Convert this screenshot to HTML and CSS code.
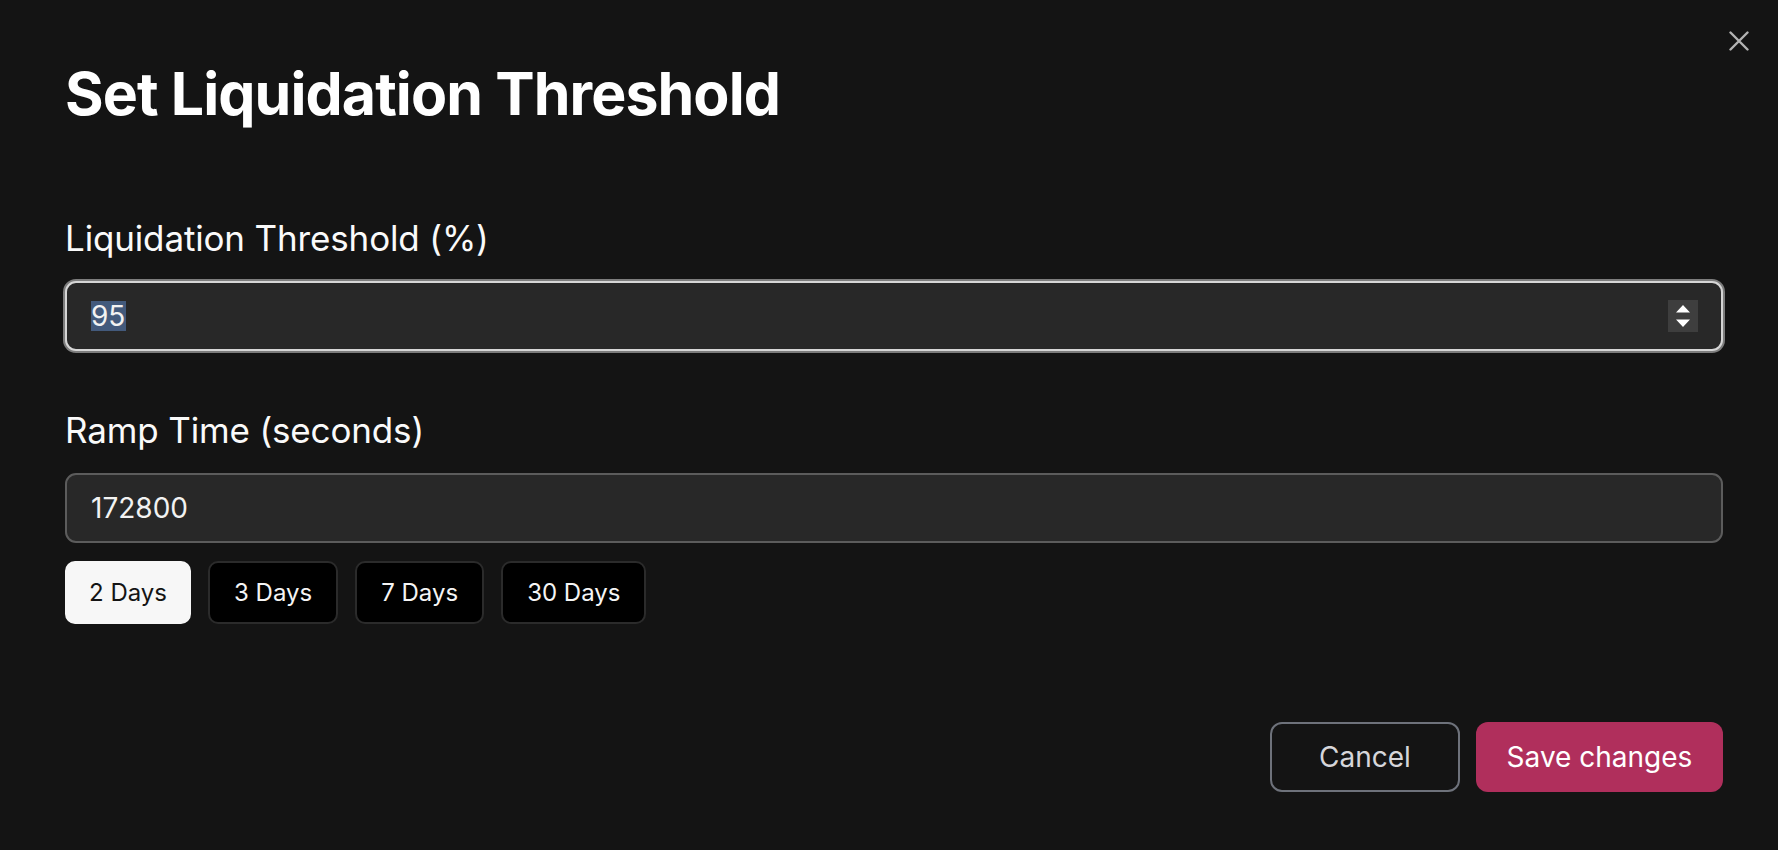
FILE: index.html
```html
<!DOCTYPE html>
<html lang="en">
<head>
<meta charset="utf-8">
<title>Set Liquidation Threshold</title>
<link rel="stylesheet" href="styles.css">
</head>
<body>
<div class="dialog">
  <button class="close" aria-label="Close">
    <svg width="20" height="20" viewBox="0 0 20 20"><path d="M1.5 1.5 L18.5 18.5 M18.5 1.5 L1.5 18.5" stroke="#b3b3b3" stroke-width="2.4" stroke-linecap="round" fill="none"/></svg>
  </button>
  <h1 class="title">Set Liquidation Threshold</h1>

  <div class="field field-first">
    <label class="label">Liquidation Threshold (%)</label>
    <div class="input input-focus">
      <span class="value"><span class="selected">95</span></span>
      <span class="spinner">
        <svg width="30" height="32" viewBox="0 0 30 32"><path d="M8 12.5 L15 5 L22 12.5 Z M8 19.5 L22 19.5 L15 27 Z" fill="#ffffff"/></svg>
      </span>
    </div>
  </div>

  <div class="field field-second">
    <label class="label">Ramp Time (seconds)</label>
    <div class="input">
      <span class="value">172800</span>
    </div>
  </div>

  <div class="presets">
    <button class="preset preset-active">2 Days</button>
    <button class="preset">3 Days</button>
    <button class="preset">7 Days</button>
    <button class="preset">30 Days</button>
  </div>

  <div class="footer">
    <button class="btn btn-cancel">Cancel</button>
    <button class="btn btn-save">Save changes</button>
  </div>
</div>
</body>
</html>
```
FILE: styles.css
```css
* { box-sizing: border-box; }
html, body {
  margin: 0;
  height: 100%;
  background: #141414;
}
body {
  font-family: Inter, "Noto Sans", "Liberation Sans", sans-serif;
  color: #fafafa;
}
.dialog {
  position: relative;
  height: 850px;
  padding: 58px 55px 0 65px;
  display: flex;
  flex-direction: column;
}
.close {
  position: absolute;
  top: 31px;
  right: 29px;
  width: 20px;
  height: 20px;
  padding: 0;
  border: 0;
  background: transparent;
  display: flex;
}
.title {
  margin: 0;
  font-size: 59px;
  line-height: 72px;
  font-weight: 700;
  color: #ffffff;
  letter-spacing: -0.9px;
}
.field {
  display: flex;
  flex-direction: column;
  gap: 22px;
}
.field-first { margin-top: 87px; }
.field-second { margin-top: 58px; }
.label {
  font-size: 35px;
  line-height: 42px;
  font-weight: 400;
  color: #fafafa;
  letter-spacing: -0.15px;
}
.input {
  height: 70px;
  border: 2px solid #5c5c5c;
  border-radius: 11px;
  background: #282828;
  display: flex;
  align-items: center;
  justify-content: space-between;
  padding: 0 23px 0 24px;
  font-size: 28px;
  color: #f2f2f2;
}
.input-focus {
  border-color: #d6d6d6;
  box-shadow: 0 0 0 2px #7d7d7d;
}
.value {
  line-height: 30px;
}
.selected {
  display: inline-block;
  background: #435a7c;
  line-height: 30px;
  padding: 0 1px 0 0;
}
.spinner {
  width: 30px;
  height: 32px;
  background: #3e3e3e;
  display: flex;
}
.presets {
  margin-top: 18px;
  display: flex;
  gap: 17px;
}
.preset {
  height: 63px;
  padding: 0 24px;
  border: 2px solid #2b2b2b;
  border-radius: 10px;
  background: #000000;
  color: #f5f5f5;
  font-family: Inter, "Noto Sans", "Liberation Sans", sans-serif;
  font-size: 24px;
  font-weight: 400;
}
.preset-active {
  padding: 0 22px;
  background: #f7f7f7;
  border-color: #f7f7f7;
  color: #141414;
}
.footer {
  margin-top: 98px;
  display: flex;
  justify-content: flex-end;
  gap: 16px;
}
.btn {
  height: 70px;
  border-radius: 12px;
  font-family: Inter, "Noto Sans", "Liberation Sans", sans-serif;
  font-size: 28px;
  font-weight: 400;
}
.btn-cancel {
  width: 190px;
  background: transparent;
  border: 2px solid #6e727b;
  color: #d6d6da;
}
.btn-save {
  width: 247px;
  background: #b02f5c;
  border: 0;
  color: #ffffff;
}
```
